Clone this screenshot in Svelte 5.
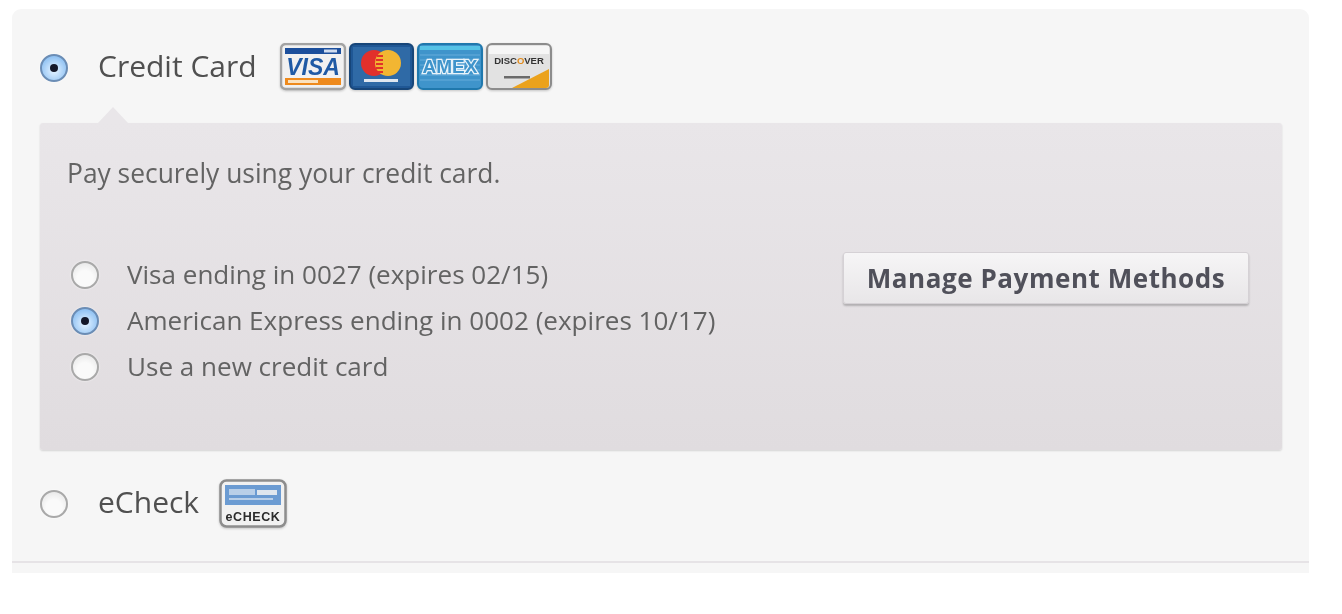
<script>
  const cards = [
    { label: 'Visa ending in 0027 (expires 02/15)', checked: false },
    { label: 'American Express ending in 0002 (expires 10/17)', checked: true },
    { label: 'Use a new credit card', checked: false }
  ];
</script>

<div class="page">
  <section class="payment">
    <div class="method method-card">
      <span class="radio checked"></span>
      <span class="method-label">Credit Card</span>
      <div class="logos">
        <svg class="logo" width="66" height="48" viewBox="0 0 66 48">
          <rect x="1" y="1" width="64" height="45" rx="5" fill="#f1f1f1" stroke="#a3a3a3" stroke-width="2.500"/>
          <rect x="5" y="5" width="56" height="6" fill="#1c4f9c"/>
          <rect x="44" y="6.500" width="13" height="3" fill="#cfdcef"/>
          <text x="33" y="32" class="t-visa">VISA</text>
          <rect x="5" y="35" width="56" height="7" fill="#ee8a1d"/>
          <rect x="8" y="37" width="30" height="3" fill="#fbe2bf"/>
        </svg>
        <svg class="logo" width="65" height="48" viewBox="0 0 65 48">
          <rect x="1" y="1" width="63" height="45" rx="5" fill="#1f5795" stroke="#174679" stroke-width="2"/>
          <rect x="4" y="4" width="57" height="39" fill="#2f6aa6"/>
          <circle cx="25" cy="20" r="13" fill="#e2302b"/>
          <circle cx="39" cy="20" r="13" fill="#f2b632"/>
          <path d="M28 13h6M27 17h7M27 21h7M27 25h7M28 29h6" stroke="#e2302b" stroke-width="2"/>
          <rect x="15" y="36" width="34" height="3" fill="#dfe7f0"/>
        </svg>
        <svg class="logo" width="66" height="48" viewBox="0 0 66 48">
          <rect x="1" y="1" width="64" height="45" rx="5" fill="#3f94cb" stroke="#1f78ad" stroke-width="2"/>
          <rect x="3" y="3" width="60" height="4" fill="#55c2e6"/>
          <path d="M3 12h60M3 17h60M3 22h60M3 27h60M3 32h60M3 37h60" stroke="#5aa4d6" stroke-width="1.500"/>
          <text x="33" y="30" class="t-amex">AMEX</text>
        </svg>
        <svg class="logo" width="66" height="48" viewBox="0 0 66 48">
          <rect x="1" y="1" width="64" height="45" rx="5" fill="#e2e2e2" stroke="#8c8c8c" stroke-width="2"/>
          <rect x="3" y="3" width="60" height="8" fill="#f6f6f6"/>
          <path d="M26 45 L63 26 V42 Q63 45 60 45 Z" fill="#eba21c"/>
          <text x="33" y="21" class="t-disc">DISC<tspan class="t-disc-o">O</tspan>VER</text>
          <rect x="18" y="33" width="26" height="2.500" fill="#6a6a6a"/>
        </svg>
      </div>
    </div>

    <div class="details">
      <p class="intro">Pay securely using your credit card.</p>
      <div class="saved">
        <ul class="cards">
          {#each cards as card}
            <li class="card-row">
              <span class="radio" class:checked={card.checked}></span>
              <span class="card-label">{card.label}</span>
            </li>
          {/each}
        </ul>
        <button class="manage">Manage Payment Methods</button>
      </div>
    </div>

    <div class="method method-check">
      <span class="radio"></span>
      <span class="method-label">eCheck</span>
      <svg class="logo" width="68" height="50" viewBox="0 0 68 50">
        <rect x="1.500" y="1.500" width="65" height="46" rx="6" fill="#f1f1f1" stroke="#8d8d8d" stroke-width="2.500"/>
        <rect x="6" y="6" width="56" height="20" fill="#6b9bd2"/>
        <rect x="10" y="10" width="26" height="6" fill="#b9cfe8"/>
        <rect x="38" y="11" width="20" height="5" fill="#dfe6ee"/>
        <rect x="10" y="19" width="44" height="2" fill="#b9cfe8"/>
        <text x="34" y="42" class="t-check">eCHECK</text>
      </svg>
    </div>
  </section>
</div>

<style>
  :global(body) {
    margin: 0;
    background: #ffffff;
  }

  .page {
    padding: 9px 33px 0 12px;
    font-family: "Open Sans", "Noto Sans", sans-serif;
    color: #5a5a5a;
    filter: blur(0.7px);
  }

  .payment {
    height: 564px;
    box-sizing: border-box;
    padding: 0 27px 0 28px;
    background: #f6f6f6;
    border-radius: 9px 9px 0 0;
    display: flex;
    flex-direction: column;
    position: relative;
  }

  .payment::after {
    content: "";
    position: absolute;
    left: 0;
    right: 0;
    bottom: 10px;
    height: 2px;
    background: #e6e3e6;
  }

  .method {
    display: flex;
    align-items: center;
  }

  .method-card {
    height: 114px;
  }

  .method-card .radio {
    margin-top: 4px;
  }

  .method-check {
    margin-top: 29px;
    height: 50px;
  }

  .method-label {
    margin-left: 30px;
    font-size: 30px;
    line-height: 40px;
    color: #505050;
  }

  .method-card .method-label {
    margin-right: 23px;
  }

  .method-check .method-label {
    margin-right: 20px;
    padding-bottom: 4px;
  }

  .logos {
    display: flex;
    gap: 3px;
    margin-top: 2px;
  }

  .logo {
    display: block;
    flex: none;
    filter: blur(0.5px) drop-shadow(0 1px 1px rgba(0, 0, 0, 0.2));
  }

  .logo text {
    font-family: "Liberation Sans", sans-serif;
    text-anchor: middle;
    font-weight: 700;
  }

  .t-visa {
    font-size: 23px;
    font-style: italic;
    fill: #1f5aa5;
  }

  .t-amex {
    font-size: 19px;
    fill: #3f94cb;
    stroke: #e8f3fa;
    stroke-width: 2.5px;
    paint-order: stroke;
  }

  .t-disc {
    font-size: 9.5px;
    fill: #333;
  }

  .t-disc-o {
    fill: #e08a1c;
  }

  .t-check {
    font-size: 12.5px;
    letter-spacing: 0.6px;
    fill: #2b2b2b;
  }

  .radio {
    flex: none;
    width: 28px;
    height: 28px;
    box-sizing: border-box;
    border-radius: 50%;
    border: 2.5px solid #a9a9a9;
    background: radial-gradient(circle at 50% 65%, #fafafa 40%, #e2e2e2 100%);
    box-shadow: 0 0 2px rgba(255, 255, 255, 0.9);
    display: inline-block;
    position: relative;
  }

  .radio.checked {
    border-color: #6b8db5;
    background: radial-gradient(circle at 50% 60%, #d6ebff 15%, #8fc1f2 75%, #77a9de 100%);
  }

  .radio.checked::after {
    content: "";
    position: absolute;
    left: 50%;
    top: 50%;
    width: 8px;
    height: 8px;
    margin: -4px 0 0 -4px;
    border-radius: 50%;
    background: #14182a;
  }

  .details {
    height: 327px;
    box-sizing: border-box;
    padding: 31px 33px 0 27px;
    background: linear-gradient(#e9e6e9, #e0dcdf);
    border-radius: 3px;
    box-shadow: 0 1px 2px rgba(0, 0, 0, 0.14);
    position: relative;
  }

  .details::before {
    content: "";
    position: absolute;
    left: 58px;
    top: -16px;
    border-left: 15px solid transparent;
    border-right: 15px solid transparent;
    border-bottom: 16px solid #e9e6e9;
  }

  .intro {
    margin: 0;
    font-size: 26.4px;
    line-height: 38px;
    color: #636363;
  }

  .saved {
    margin-top: 58px;
    display: flex;
    justify-content: space-between;
    align-items: flex-start;
  }

  .cards {
    list-style: none;
    margin: 2px 0 0 4px;
    padding: 0;
    font-size: 26.05px;
    color: #636363;
  }

  .card-row {
    height: 46px;
    display: flex;
    align-items: center;
    gap: 28px;
    line-height: 34px;
  }

  .card-label {
    padding-bottom: 2px;
  }

  .manage {
    width: 406px;
    height: 52px;
    margin: 2px 0 0;
    padding: 0;
    font: 700 26px "Open Sans", "Noto Sans", sans-serif;
    letter-spacing: 0.55px;
    color: #50505a;
    background: linear-gradient(#f6f5f6, #e8e6e8);
    border: 1px solid #d5d1d5;
    border-radius: 3px;
    box-shadow: 0 2px 2px rgba(0, 0, 0, 0.22);
  }
</style>
